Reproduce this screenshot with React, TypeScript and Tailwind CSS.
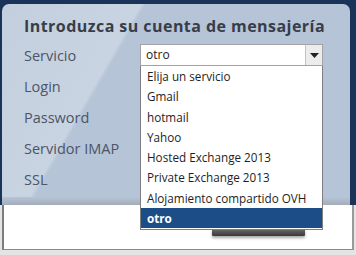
import React from "react";

const services = [
  "Elija un servicio",
  "Gmail",
  "hotmail",
  "Yahoo",
  "Hosted Exchange 2013",
  "Private Exchange 2013",
  "Alojamiento compartido OVH",
  "otro",
];

const labels = ["Servicio", "Login", "Password", "Servidor IMAP", "SSL"];

function App() {
  const selected = "otro";
  return (
    <div
      className="relative w-[356px] h-[255px] overflow-hidden bg-[#e4e4e4]"
      style={{ fontFamily: '"Open Sans", "Noto Sans", sans-serif' }}
    >
      <div className="h-[205px] bg-[#193458] pt-[4px] pl-[2px] pr-[6px]">
        <div className="h-full rounded-t-[7px] bg-[linear-gradient(120deg,#c3cfde_0%,#c9d4e2_30%,#b5c4d7_31%,#b6c4d7_100%)] pl-[22px] pt-[12px] relative">
          <h1 className="text-[16px] font-bold text-[#383d48] leading-[20px] tracking-[0.45px]">
            Introduzca su cuenta de mensajería
          </h1>
          <div className="mt-[9px] flex flex-col">
            {labels.map((l) => (
              <div key={l} className="h-[31px] text-[14.5px] leading-[21px] text-[#4c5566]">
                {l}
              </div>
            ))}
          </div>
          <div className="absolute left-0 right-0 bottom-0 h-[8px] bg-gradient-to-b from-[#b6c4d7] to-[#a3adb9]" />
        </div>
      </div>
      <div className="h-[45px] bg-white border-l-[2px] border-b border-r-[2px] border-l-[#7d7d7d] border-b-[#8a8a8a] border-r-[#9a9a9a] ml-[2px] mr-[2px] pt-[24px]">
        <div className="ml-[208px] w-[93px] h-[7px] rounded-[1px] bg-gradient-to-b from-[#6a6a6a] to-[#3a3a3a] shadow-[0_2px_3px_rgba(0,0,0,0.35)]" />
      </div>

      <div className="absolute left-[140px] top-[44px] w-[183px]">
        <div className="h-[22px] flex items-center bg-white border border-[#a3a3a3]">
          <span className="flex-1 pl-[5px] text-[12px] text-[#222]">{selected}</span>
          <span className="w-[17px] h-full flex items-center justify-center bg-[#ececec] border-l border-[#c4c4c4]">
            <svg width="9" height="5" viewBox="0 0 9 5">
              <path d="M0 0 L9 0 L4.5 5 Z" fill="#222" />
            </svg>
          </span>
        </div>
        <ul className="bg-white border-l border-r border-b border-[#7f7f7f] pb-[1px]">
          {services.map((s) => (
            <li
              key={s}
              className={
                s === selected
                  ? "h-[20.25px] pl-[6px] text-[11.7px] leading-[21px] font-bold text-white bg-[#1c4d87]"
                  : "h-[20.25px] pl-[6px] text-[11.7px] leading-[21px] text-[#1e1e1e]"
              }
            >
              {s}
            </li>
          ))}
        </ul>
      </div>
    </div>
  );
}

export default App;
